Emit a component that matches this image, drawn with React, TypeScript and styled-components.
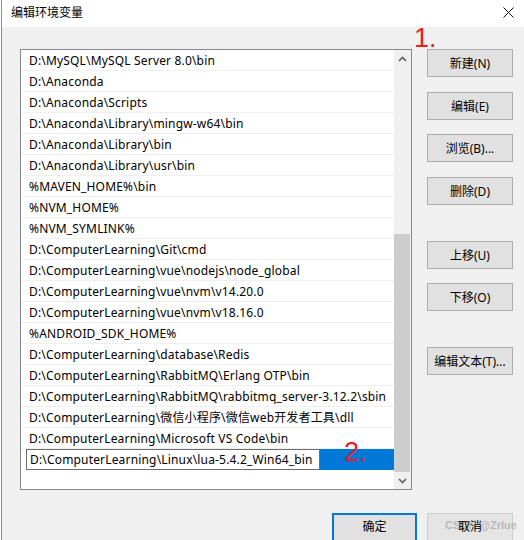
import React from "react";
import styled, { createGlobalStyle } from "styled-components";

const Global = createGlobalStyle`
  html, body { margin: 0; padding: 0; background: #ffffff; }
  body { width: 524px; height: 540px; overflow: hidden; }
  * { box-sizing: border-box; }
`;

const FONT = `"Noto Sans", "Noto Sans CJK SC", sans-serif`;

const Page = styled.div`
  position: relative;
  width: 524px;
  height: 540px;
  padding-left: 1px;
  background: #ffffff;
  font-family: ${FONT};
  font-size: 12px;
  color: #000;
  overflow: hidden;
`;

const Window = styled.div`
  height: 100%;
  border-left: 1px solid #8c8c8c;
  display: flex;
  flex-direction: column;
  background: #f0f0f0;
`;

const TitleBar = styled.div`
  height: 27px;
  background: #ffffff;
  display: flex;
  align-items: center;
  justify-content: space-between;
  padding: 0 10px 0 9px;
  flex: none;
`;

const Title = styled.span`
  font-size: 12px;
  line-height: 16px;
  margin-top: -2px;
`;

const Close = styled.svg`
  width: 11px;
  height: 11px;
  margin-top: -3px;
`;

const Body = styled.div`
  display: flex;
  align-items: flex-start;
  padding: 22px 0 0 18px;
  gap: 15px;
`;

const ListBox = styled.div`
  width: 392px;
  height: 441px;
  border: 1px solid #828790;
  background: #ffffff;
  display: flex;
  flex: none;
`;

const Rows = styled.div`
  flex: 1;
  display: flex;
  flex-direction: column;
  letter-spacing: 0.17px;
`;

const Row = styled.div`
  height: 21px;
  flex: none;
  border-bottom: 1px solid #f0f0f0;
  display: flex;
  align-items: center;
  padding: 1px 0 0 8px;
  white-space: nowrap;
  line-height: 19px;
`;

const EditRow = styled.div`
  height: 21px;
  flex: none;
  display: flex;
  padding-left: 5px;
`;

const EditBox = styled.div`
  width: 294px;
  height: 21px;
  flex: none;
  background: #ffffff;
  border: 1px solid #6e6e6e;
  padding: 1px 0 0 3px;
  line-height: 18px;
  white-space: nowrap;
  overflow: hidden;
`;

const Highlight = styled.div`
  flex: 1;
  background: #0078d7;
`;

const ScrollBar = styled.div`
  width: 17px;
  background: #f0f0f0;
  display: flex;
  flex-direction: column;
  flex: none;
`;

const ArrowCell = styled.div`
  height: 17px;
  display: flex;
  align-items: center;
  justify-content: center;
  flex: none;
`;

const Track = styled.div`
  flex: 1;
  display: flex;
  flex-direction: column;
  justify-content: flex-end;
`;

const Thumb = styled.div`
  height: 238px;
  margin: 0 1px 0 0;
  background: #cdcdcd;
`;

const ButtonCol = styled.div`
  display: flex;
  flex-direction: column;
  width: 86px;
`;

const Btn = styled.div<{ $gap?: number }>`
  height: 28px;
  margin-top: ${(p) => p.$gap ?? 0}px;
  border: 1px solid #adadad;
  background: #e1e1e1;
  display: flex;
  align-items: center;
  justify-content: center;
  white-space: nowrap;
  font-size: 12px;
`;

const Footer = styled.div`
  display: flex;
  gap: 10px;
  padding-left: 330px;
  margin-top: 23px;
`;

const FooterBtn = styled.div<{ $primary?: boolean }>`
  position: relative;
  width: ${(p) => (p.$primary ? "85px" : "86px")};
  height: 30px;
  border: ${(p) => (p.$primary ? "2px solid #0078d7" : "1px solid #cccccc")};
  background: ${(p) => (p.$primary ? "#e1e1e1" : "#e5e5e5")};
  display: flex;
  align-items: center;
  justify-content: center;
  padding-bottom: 4px;
`;

const Label = styled.span`
  position: relative;
  z-index: 1;
`;

const Watermark = styled.span`
  position: absolute;
  left: 17px;
  top: 5px;
  font-size: 11px;
  font-weight: 700;
  color: rgba(175, 175, 175, 0.85);
  white-space: nowrap;
  font-family: "Liberation Sans", sans-serif;
`;

const Annot = styled.span<{ $x: number; $y: number }>`
  position: absolute;
  left: ${(p) => p.$x}px;
  top: ${(p) => p.$y}px;
  color: #ec1c24;
  font-size: 27px;
  line-height: 27px;
  font-family: "Liberation Sans", sans-serif;
`;

const paths = [
  "D:\\MySQL\\MySQL Server 8.0\\bin",
  "D:\\Anaconda",
  "D:\\Anaconda\\Scripts",
  "D:\\Anaconda\\Library\\mingw-w64\\bin",
  "D:\\Anaconda\\Library\\bin",
  "D:\\Anaconda\\Library\\usr\\bin",
  "%MAVEN_HOME%\\bin",
  "%NVM_HOME%",
  "%NVM_SYMLINK%",
  "D:\\ComputerLearning\\Git\\cmd",
  "D:\\ComputerLearning\\vue\\nodejs\\node_global",
  "D:\\ComputerLearning\\vue\\nvm\\v14.20.0",
  "D:\\ComputerLearning\\vue\\nvm\\v18.16.0",
  "%ANDROID_SDK_HOME%",
  "D:\\ComputerLearning\\database\\Redis",
  "D:\\ComputerLearning\\RabbitMQ\\Erlang OTP\\bin",
  "D:\\ComputerLearning\\RabbitMQ\\rabbitmq_server-3.12.2\\sbin",
  "D:\\ComputerLearning\\微信小程序\\微信web开发者工具\\dll",
  "D:\\ComputerLearning\\Microsoft VS Code\\bin",
];

const buttons: { label: string; gap: number }[] = [
  { label: "新建(N)", gap: 0 },
  { label: "编辑(E)", gap: 15 },
  { label: "浏览(B)...", gap: 14 },
  { label: "删除(D)", gap: 15 },
  { label: "上移(U)", gap: 36 },
  { label: "下移(O)", gap: 14 },
  { label: "编辑文本(T)...", gap: 36 },
];

const Chevron = ({ up }: { up?: boolean }) => (
  <svg width="9" height="6" viewBox="0 0 9 6">
    <path
      d={up ? "M1 5 L4.5 1.5 L8 5" : "M1 1 L4.5 4.5 L8 1"}
      fill="none"
      stroke="#606060"
      strokeWidth="1.6"
    />
  </svg>
);

export default function App() {
  return (
    <>
      <Global />
      <Page>
        <Window>
          <TitleBar>
            <Title>编辑环境变量</Title>
            <Close viewBox="0 0 11 11">
              <path d="M0.5 0.5 L10.5 10.5 M10.5 0.5 L0.5 10.5" stroke="#111" strokeWidth="1" />
            </Close>
          </TitleBar>
          <Body>
            <ListBox>
              <Rows>
                {paths.map((p) => (
                  <Row key={p}>{p}</Row>
                ))}
                <EditRow>
                  <EditBox>D:\ComputerLearning\Linux\lua-5.4.2_Win64_bin</EditBox>
                  <Highlight />
                </EditRow>
              </Rows>
              <ScrollBar>
                <ArrowCell>
                  <Chevron up />
                </ArrowCell>
                <Track>
                  <Thumb />
                </Track>
                <ArrowCell>
                  <Chevron />
                </ArrowCell>
              </ScrollBar>
            </ListBox>
            <ButtonCol>
              {buttons.map((b) => (
                <Btn key={b.label} $gap={b.gap}>
                  {b.label}
                </Btn>
              ))}
            </ButtonCol>
          </Body>
          <Footer>
            <FooterBtn $primary>
              <Label>确定</Label>
            </FooterBtn>
            <FooterBtn>
              <Watermark>CSDN @Zrlue</Watermark>
              <Label>取消</Label>
            </FooterBtn>
          </Footer>
        </Window>
        <Annot $x={414} $y={25}>1.</Annot>
        <Annot $x={344} $y={439}>2.</Annot>
      </Page>
    </>
  );
}
